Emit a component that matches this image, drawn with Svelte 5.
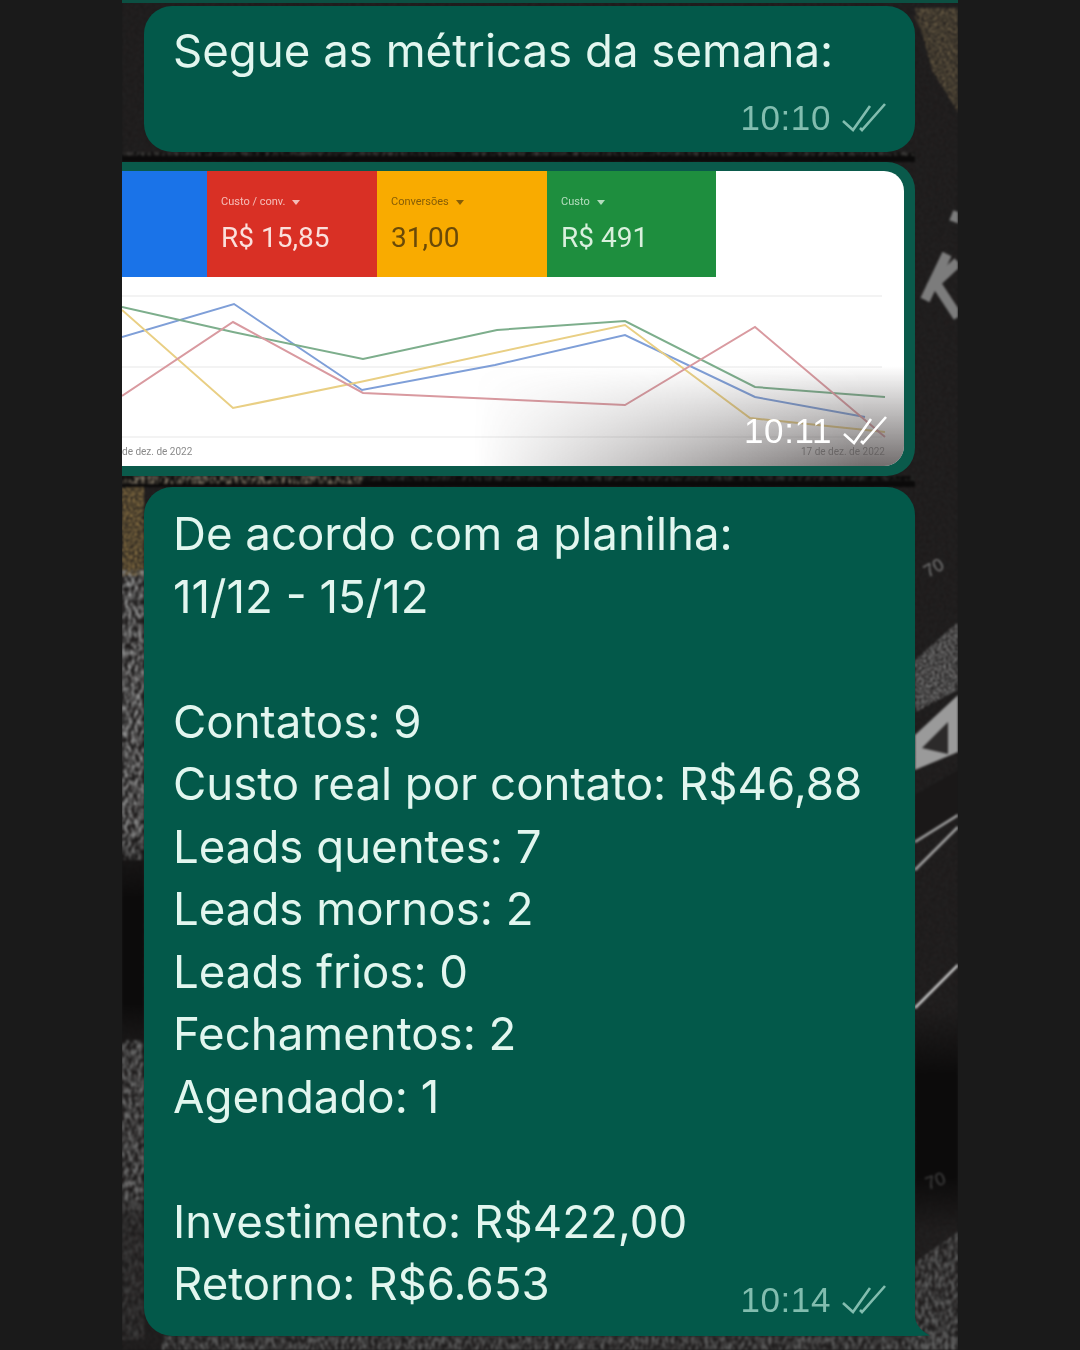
<script>
  const lines = ['De acordo com a planilha:', '11/12 - 15/12', '\u00a0', 'Contatos: 9', 'Custo real por contato: R$46,88', 'Leads quentes: 7', 'Leads mornos: 2', 'Leads frios: 0', 'Fechamentos: 2', 'Agendado: 1', '\u00a0', 'Investimento: R$422,00'];
  const tiles = [
    { cls: 'blue', label: '', value: '' },
    { cls: 'red', label: 'Custo / conv.', value: 'R$ 15,85' },
    { cls: 'yellow', label: 'Conversões', value: '31,00' },
    { cls: 'green', label: 'Custo', value: 'R$ 491' }
  ];
  const series = [
    { color: '#7f9fd8', pts: '0,166 112,133 240,219 373,194 503,164 633,226 743,246' },
    { color: '#e9cf84', pts: '0,139 111,237 238,211 503,154 628,247 763,261' },
    { color: '#7dae8c', pts: '0,136 111,161 241,188 375,159 503,150 633,216 763,226' },
    { color: '#d99aa0', pts: '0,225 111,151 241,222 503,234 633,156 763,266' }
  ];
</script>

<div class="panel">
  <svg class="wall" viewBox="0 0 836 1350" width="836" height="1350" aria-hidden="true">
    <defs>
      <filter id="grain" x="0" y="0" width="100%" height="100%">
        <feTurbulence type="fractalNoise" baseFrequency="0.45 0.55" numOctaves="2" seed="4" result="n" />
        <feColorMatrix in="n" type="matrix" values="0 0 0 0 0  0 0 0 0 0  0 0 0 0 0  2.2 0 0 0 -0.7" result="a" />
        <feComposite in="SourceGraphic" in2="a" operator="in" />
      </filter>
      <filter id="fibre" x="0" y="0" width="100%" height="100%">
        <feTurbulence type="fractalNoise" baseFrequency="0.3 0.16" numOctaves="3" seed="9" result="n" />
        <feColorMatrix in="n" type="matrix" values="0 0 0 0 0  0 0 0 0 0  0 0 0 0 0  2.6 0 0 0 -0.9" result="a" />
        <feComposite in="SourceGraphic" in2="a" operator="in" />
      </filter>
      <linearGradient id="darkL" x1="0" y1="0" x2="0" y2="1">
        <stop offset="0" stop-color="#0c0b0b" stop-opacity="0" />
        <stop offset="0.3" stop-color="#0c0b0b" />
        <stop offset="0.75" stop-color="#0c0b0b" />
        <stop offset="1" stop-color="#0c0b0b" stop-opacity="0" />
      </linearGradient>
    </defs>
    <rect width="836" height="1350" fill="#1b1919" />
    <rect width="836" height="1350" fill="#262424" filter="url(#grain)" />
    <rect x="793" y="1008" width="43" height="224" fill="url(#darkL)" />

    <rect x="0" y="476" width="22" height="100" fill="#a3854b" filter="url(#grain)" />
    <rect x="0" y="570" width="22" height="290" fill="#8f8f8f" filter="url(#fibre)" />
    <rect x="0" y="830" width="22" height="230" fill="url(#darkL)" />
    <rect x="0" y="1040" width="22" height="170" fill="#6e6e6e" filter="url(#fibre)" />
    <rect x="0" y="1200" width="22" height="140" fill="#3d3c3c" filter="url(#fibre)" />
    <rect x="0" y="152" width="793" height="10" fill="#0b0a0a" />
    <rect x="0" y="152" width="793" height="4" fill="#3a3937" filter="url(#fibre)" />
    <rect x="0" y="476" width="793" height="11" fill="#0b0a0a" />
    <rect x="0" y="476" width="240" height="8" fill="#7a7060" filter="url(#fibre)" />
    <rect x="240" y="476" width="553" height="5" fill="#2c2b2a" filter="url(#fibre)" />
    <rect x="40" y="1336" width="796" height="14" fill="#5c5c5c" filter="url(#fibre)" />

    <polygon points="793,8 836,8 836,112 810,70" fill="#7a6a4c" filter="url(#grain)" />
    <path d="M793 16 L836 100 M812 10 L836 50" stroke="#3e372c" stroke-width="2" fill="none" />
    <g fill="none" stroke="#7c7c7c" stroke-width="10">
      <path d="M803 300 L825 254" />
      <path d="M808 288 L836 262" />
      <path d="M815 285 L836 317" />
      <path d="M832 222 L836 212" />
    </g>
    <text x="806" y="578" class="seventy" transform="rotate(-30 806 578)">70</text>
    <text x="806" y="1190" class="seventy dim" transform="rotate(-20 806 1190)">70</text>

    <polygon points="793,660 836,622 836,690 793,712" fill="#8b8b8b" filter="url(#grain)" />
    <polygon points="793,735 836,695 836,752 793,770" fill="#9a9a9a" />
    <polygon points="800,748 826,722 826,754" fill="#2c2a2a" />
    <polygon points="793,795 836,770 836,815 793,838" fill="#1a1818" />
    <path d="M793 842 L836 815 M793 870 L836 827" stroke="#a3a3a3" stroke-width="2.5" fill="none" />
    <path d="M793 1008 L836 965" stroke="#c8c8c8" stroke-width="2.5" fill="none" />
    <polygon points="793,1262 836,1232 836,1350 793,1350" fill="#5e5e5e" filter="url(#fibre)" />
  </svg>

  <div class="thread">
    <div class="sliver"></div>

    <div class="bubble first">
      <p class="line">Segue as métricas da semana:</p>
      <div class="meta end">
        <span>10:10</span>
        <svg class="ticks" viewBox="0 0 44 30"><path d="M1 18 L11 27 L28 3 M18 25 L20 27 L43 1" /></svg>
      </div>
    </div>

    <div class="bubble media">
      <div class="shot">
        <div class="tiles">
          {#each tiles as t}
            <div class="tile {t.cls}">
              {#if t.label}
                <div class="tile-label">{t.label}<i class="caret"></i></div>
                <div class="tile-value">{t.value}</div>
              {/if}
            </div>
          {/each}
        </div>
        <svg class="chart" viewBox="0 106 782 189" width="782" height="189" aria-hidden="true">
          <path d="M0 125 H760 M0 196 H760 M0 266 H760" stroke="#f0f0f0" stroke-width="1.5" fill="none" />
          {#each series as s}
            <polyline points={s.pts} stroke={s.color} stroke-width="2" fill="none" />
          {/each}
          <text x="0" y="284" class="axis">de dez. de 2022</text>
          <text x="763" y="284" class="axis" text-anchor="end">17 de dez. de 2022</text>
        </svg>
        <div class="shade"></div>
        <div class="meta over">
          <span>10:11</span>
          <svg class="ticks" viewBox="0 0 44 30"><path d="M1 18 L11 27 L28 3 M18 25 L20 27 L43 1" /></svg>
        </div>
      </div>
    </div>

    <div class="bubble long">
      {#each lines as l}
        <p class="line">{l}</p>
      {/each}
      <div class="last">
        <p class="line">Retorno: R$6.653</p>
        <div class="meta">
          <span>10:14</span>
          <svg class="ticks" viewBox="0 0 44 30"><path d="M1 18 L11 27 L28 3 M18 25 L20 27 L43 1" /></svg>
        </div>
      </div>
      <svg class="tail" viewBox="0 0 16 19"><path d="M0 0 C1 8 6 14 15 18.5 L0 19 Z" /></svg>
    </div>
  </div>
</div>

<style>
  :global(body) {
    margin: 0;
    background: #1a1a1a;
  }
  .panel {
    position: relative;
    width: 836px;
    height: 1350px;
    margin-left: 122px;
    overflow: hidden;
    font-family: Inter, "Liberation Sans", sans-serif;
  }
  .wall {
    position: absolute;
    inset: 0;
    display: block;
    filter: blur(0.8px);
  }
  .seventy {
    font-family: "Liberation Sans", sans-serif;
    font-size: 18px;
    fill: #7a7a7a;
  }
  .dim {
    fill: #444;
  }
  .thread {
    position: relative;
    display: flex;
    flex-direction: column;
  }
  .sliver {
    height: 3px;
    margin-bottom: 3px;
    background: #0c4f42;
  }
  .bubble {
    background: #03594a;
    color: #e2f6ef;
    box-sizing: border-box;
  }
  .first {
    width: 771px;
    height: 146px;
    margin-left: 22px;
    padding: 14px 29px 14px;
    border-radius: 28px;
    display: flex;
    flex-direction: column;
    justify-content: space-between;
  }
  .media {
    width: 793px;
    height: 314px;
    margin-top: 10px;
    padding: 9px 11px 10px 0;
    border-radius: 0 28px 28px 0;
    background: #0a5a4b;
  }
  .long {
    position: relative;
    width: 771px;
    height: 849px;
    margin-top: 11px;
    margin-left: 22px;
    padding: 16px 29px 0;
    border-radius: 28px 28px 0 28px;
  }
  .line {
    margin: 0;
    font-size: 45.6px;
    line-height: 62.5px;
    white-space: nowrap;
    filter: blur(0.5px);
  }
  .last {
    display: flex;
    justify-content: space-between;
    align-items: flex-end;
  }
  .meta {
    display: flex;
    align-items: center;
    gap: 11px;
    color: #82bdaf;
    font-family: "Liberation Sans", sans-serif;
    font-size: 35px;
    letter-spacing: 0.6px;
    line-height: 40px;
    filter: blur(0.5px);
  }
  .end {
    align-self: flex-end;
  }
  .last .meta {
    margin-bottom: -4px;
  }
  .ticks {
    width: 44px;
    height: 30px;
    fill: none;
    stroke: currentColor;
    stroke-width: 2.6;
  }
  .shot {
    position: relative;
    height: 295px;
    background: #fff;
    border-radius: 0 20px 20px 0;
    overflow: hidden;
  }
  .tiles {
    display: flex;
    height: 106px;
  }
  .tile {
    box-sizing: border-box;
    width: 170px;
    padding: 23px 0 0 14px;
    filter: blur(0.6px);
  }
  .blue {
    width: 85px;
    background: #1a73e8;
  }
  .red {
    background: #d93025;
    color: #fbe0dc;
  }
  .yellow {
    background: #f9ab00;
    color: #6a4a08;
  }
  .green {
    width: 169px;
    background: #1e8e3e;
    color: #d9f0dd;
  }
  .tile-label {
    display: flex;
    align-items: center;
    gap: 7px;
    font-family: Roboto, sans-serif;
    font-size: 11px;
    line-height: 16px;
    opacity: 0.8;
  }
  .caret {
    width: 0;
    height: 0;
    border-left: 4.5px solid transparent;
    border-right: 4.5px solid transparent;
    border-top: 5px solid currentColor;
  }
  .tile-value {
    margin-top: 11px;
    font-family: Roboto, sans-serif;
    font-size: 28px;
    line-height: 34px;
  }
  .chart {
    display: block;
    filter: blur(0.5px);
  }
  .axis {
    font-family: Roboto, sans-serif;
    font-size: 10px;
    fill: #8a8a8a;
  }
  .shade {
    position: absolute;
    left: 0;
    right: 0;
    bottom: 0;
    height: 100px;
    background: linear-gradient(to bottom, rgba(90, 85, 85, 0), rgba(90, 85, 85, 0.85));
    -webkit-mask-image: linear-gradient(to right, transparent 45%, #000 95%);
    mask-image: linear-gradient(to right, transparent 45%, #000 95%);
  }
  .meta.over {
    position: absolute;
    right: 17px;
    bottom: 15px;
    color: #fff;
  }
  .tail {
    position: absolute;
    left: 100%;
    bottom: 0;
    width: 16px;
    height: 19px;
    display: block;
    fill: #03594a;
  }
</style>
